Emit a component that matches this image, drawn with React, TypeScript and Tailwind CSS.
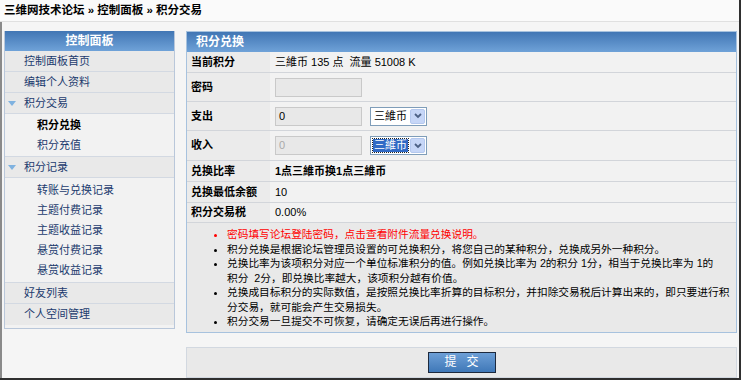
import React from "react";

function Tri() {
  return (
    <svg width="8" height="5" viewBox="0 0 8 5" className="mr-[8px] ml-[3px]">
      <path d="M0 0 L8 0 L4 5 Z" fill="#7fb2e0" />
    </svg>
  );
}

function MainItem({ text, open }: { text: string; open?: boolean }) {
  return (
    <div className="flex h-[21px] items-center border-b border-[#d3d9e2] bg-[#e9e9e9] text-[#1c3b6e]">
      {open ? <Tri /> : <span className="w-[19px]" />}
      <span>{text}</span>
    </div>
  );
}

function SubItem({ text, active }: { text: string; active?: boolean }) {
  return (
    <div
      className={`flex h-[20px] items-center pl-[32px] ${
        active ? "font-bold text-black" : "text-[#1c3b6e]"
      }`}
    >
      {text}
    </div>
  );
}

function Select({ selected }: { selected?: boolean }) {
  return (
    <div className="flex h-[19px] w-[57px] items-center whitespace-nowrap border border-[#7f9db9] bg-white">
      <div className="flex flex-1 items-center pl-[2px]">
        <span
          className={`px-[1px] leading-[13px] ${
            selected ? "bg-[#316ac5] text-white outline-1 outline-dotted outline-[#222]" : "text-black"
          }`}
        >
          三維币
        </span>
      </div>
      <div className="m-[1px] flex h-[15px] w-[15px] items-center justify-center rounded-[2px] border border-[#b4c8ee] bg-[#c6d6f7]">
        <svg width="8" height="6" viewBox="0 0 8 6">
          <path d="M1 1 L4 4 L7 1" stroke="#4d6185" strokeWidth="1.8" fill="none" />
        </svg>
      </div>
    </div>
  );
}

function Row({ label, h, children }: { label: string; h: string; children: React.ReactNode }) {
  return (
    <div className={`flex ${h} border-b border-[#d2d5da]`}>
      <div className="flex w-[83px] items-center bg-[#ebebeb] pl-[4px] font-bold text-black">{label}</div>
      <div className="flex flex-1 items-center gap-[8px] bg-[#f2f2f2] pl-[5px] text-black">{children}</div>
    </div>
  );
}

const inputCls = "flex h-[19px] w-[87px] items-center border border-[#c9c9c9] bg-[#e8e8e8] pl-[3px]";

export default function App() {
  return (
    <div className="h-[381px] w-[742px] overflow-hidden bg-white font-['Liberation_Sans','Noto_Sans_CJK_SC',sans-serif] text-[11px]">
      <div className="flex h-[380px] w-[741px] flex-col border-r-2 border-b-2 border-[#2f2f2f]">
        <div className="flex h-[22px] items-center border-b border-[#e0e0e0] bg-[#fafafa] pl-[4px] text-[11.5px] font-bold text-black">
          三维网技术论坛 » 控制面板 » 积分交易
        </div>
        <div className="flex flex-1 gap-[11px] border-l-2 border-[#8a8a8a] bg-[#f5f5f5] pt-[9px] pl-[2px] pr-[1px]">
          {/* sidebar */}
          <div className="flex h-[298px] w-[171px] flex-col border-x border-b border-[#b9c7da] bg-[#f2f2f2]">
            <div className="flex h-[20px] items-center justify-center bg-gradient-to-b from-[#4176b4] to-[#6fa2d8] text-[12px] font-bold text-white">
              控制面板
            </div>
            <MainItem text="控制面板首页" />
            <MainItem text="编辑个人资料" />
            <MainItem text="积分交易" open />
            <div className="border-b border-[#d3d9e2] pt-[1px] pb-[1px]">
              <SubItem text="积分兑换" active />
              <SubItem text="积分充值" />
            </div>
            <MainItem text="积分记录" open />
            <div className="border-b border-[#d3d9e2] pt-[2px] pb-[2px]">
              <SubItem text="转账与兑换记录" />
              <SubItem text="主题付费记录" />
              <SubItem text="主题收益记录" />
              <SubItem text="悬赏付费记录" />
              <SubItem text="悬赏收益记录" />
            </div>
            <MainItem text="好友列表" />
            <div className="flex h-[21px] items-center bg-[#e9e9e9] pl-[19px] text-[#1c3b6e]">个人空间管理</div>
          </div>

          {/* main */}
          <div className="flex w-[551px] flex-col">
            <div className="border border-[#a7c2de] bg-[#f2f2f2]">
              <div className="flex h-[20px] items-center bg-gradient-to-b from-[#4176b4] to-[#6fa2d8] pl-[9px] text-[12px] font-bold text-white">
                积分兑换
              </div>
              <Row label="当前积分" h="h-[21px]">
                <span>三維币 135 点&nbsp; 流量 51008 K</span>
              </Row>
              <Row label="密码" h="h-[29px]">
                <div className={inputCls} />
              </Row>
              <Row label="支出" h="h-[29px]">
                <div className={inputCls}>0</div>
                <Select />
              </Row>
              <Row label="收入" h="h-[30px]">
                <div className={`${inputCls} text-[#aaaaaa]`}>0</div>
                <Select selected />
              </Row>
              <Row label="兑换比率" h="h-[21px]">
                <span className="font-bold">1点三維币换1点三維币</span>
              </Row>
              <Row label="兑换最低余额" h="h-[21px]">
                <span>10</span>
              </Row>
              <Row label="积分交易税" h="h-[20px]">
                <span>0.00%</span>
              </Row>
              <ul className="list-disc whitespace-nowrap bg-[#e9e9e9] pt-[4px] pb-[3px] pl-[40px] text-[10.7px] leading-[14.5px] text-black">
                <li className="text-[#ff0000]">密码填写论坛登陆密码，点击查看附件流量兑换说明。</li>
                <li>积分兑换是根据论坛管理员设置的可兑换积分，将您自己的某种积分，兑换成另外一种积分。</li>
                <li>
                  兑换比率为该项积分对应一个单位标准积分的值。例如兑换比率为 2的积分 1分，相当于兑换比率为 1的
                  <br />
                  积分 &nbsp;2分，即兑换比率越大，该项积分越有价值。
                </li>
                <li>
                  兑换成目标积分的实际数值，是按照兑换比率折算的目标积分，并扣除交易税后计算出来的，即只要进行积
                  <br />
                  分交易，就可能会产生交易损失。
                </li>
                <li>积分交易一旦提交不可恢复，请确定无误后再进行操作。</li>
              </ul>
            </div>
            <div className="mt-[14px] flex h-[31px] items-center justify-center border border-[#d2d8e0] bg-[#e9e9e9]">
              <div className="flex h-[21px] w-[68px] items-center justify-center border border-[#1d2a3e] bg-gradient-to-b from-[#6d9fd6] to-[#3f78b8] text-[12px] text-white">
                提&nbsp;&nbsp;&nbsp;交
              </div>
            </div>
          </div>
        </div>
      </div>
    </div>
  );
}
